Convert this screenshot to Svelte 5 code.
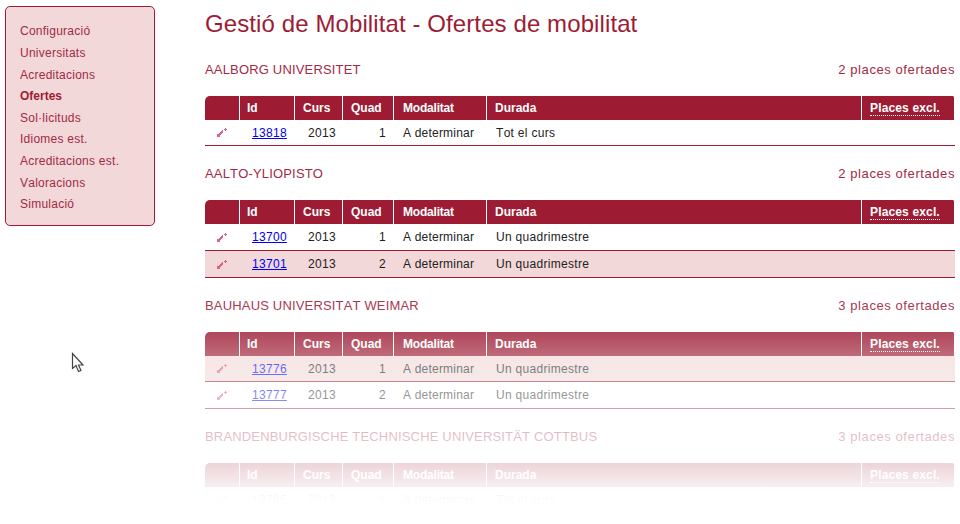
<script>
    const menu = [
        'Configuració', 'Universitats', 'Acreditacions', 'Ofertes', 'Sol·licituds',
        'Idiomes est.', 'Acreditacions est.', 'Valoracions', 'Simulació'
    ];

    const offers = [
        {
            name: 'AALBORG UNIVERSITET',
            places: 2,
            rows: [{ id: 13818, quad: 1, durada: 'Tot el curs' }]
        },
        {
            name: 'AALTO-YLIOPISTO',
            places: 2,
            rows: [
                { id: 13700, quad: 1, durada: 'Un quadrimestre' },
                { id: 13701, quad: 2, durada: 'Un quadrimestre' }
            ]
        },
        {
            name: 'BAUHAUS UNIVERSITAT WEIMAR',
            places: 3,
            rows: [
                { id: 13776, quad: 1, durada: 'Un quadrimestre' },
                { id: 13777, quad: 2, durada: 'Un quadrimestre' }
            ]
        },
        {
            name: 'BRANDENBURGISCHE TECHNISCHE UNIVERSITÄT COTTBUS',
            places: 3,
            rows: [{ id: 13785, quad: 1, durada: 'Tot el curs' }]
        }
    ];
</script>

<div class="page">
    <nav class="sidebar">
        <ul>
            {#each menu as item}
                <li class:active={item === 'Ofertes'}>{item}</li>
            {/each}
        </ul>
    </nav>

    <main class="content">
        <h1>Gestió de Mobilitat - Ofertes de mobilitat</h1>

        {#each offers as offer}
            <section>
                <div class="uni">
                    <h2>{offer.name}</h2>
                    <span class="places">{offer.places} places ofertades</span>
                </div>

                <table>
                    <thead>
                        <tr>
                            <th class="c-edit"></th>
                            <th class="c-id">Id</th>
                            <th class="c-curs">Curs</th>
                            <th class="c-quad">Quad</th>
                            <th class="c-mod">Modalitat</th>
                            <th class="c-dur">Durada</th>
                            <th class="c-exc"><span>Places excl.</span></th>
                        </tr>
                    </thead>
                    <tbody>
                        {#each offer.rows as row}
                            <tr>
                                <td class="edit">
                                    <svg width="10" height="9" viewBox="0 0 10 9" shape-rendering="crispEdges">
                                        <path fill="#d8648c" d="M0 6h3v3H0zM2 5h2v2H2zM3 4h2v2H3zM4 3h2v2H4zM5 2h1v2H5zM8 0h1v1h1v1H9v1H8V2H7V1h1z" />
                                    </svg>
                                </td>
                                <td class="id"><a href="#{row.id}">{row.id}</a></td>
                                <td class="curs">2013</td>
                                <td class="quad">{row.quad}</td>
                                <td class="mod">A determinar</td>
                                <td class="dur">{row.durada}</td>
                                <td></td>
                            </tr>
                        {/each}
                    </tbody>
                </table>
            </section>
        {/each}
    </main>

    <div class="fade"></div>

    <svg class="cursor" width="14" height="21" viewBox="0 0 14 21">
        <path d="M1.5 1.5v15l3.5-3 2.500 6 2.500-1-2.500-5.500h4.500z" fill="#fff" stroke="#444" stroke-width="1.200" />
    </svg>
</div>

<style>
    :global(body)
    {
        margin: 0;
        background: #ffffff;
    }

    .page
    {
        position: relative;
        display: flex;
        align-items: flex-start;
        height: 524px;
        overflow: hidden;
        font-family: "Liberation Sans", Arial, sans-serif;
        font-kerning: none;
        color: #222222;
    }

    .sidebar
    {
        box-sizing: border-box;
        flex: none;
        width: 150px;
        height: 220px;
        margin: 6px 0 0 5px;
        padding: 14.4px 14px 0;
        background: #f2d8d8;
        border: 1px solid #9d1c34;
        border-radius: 5px;
    }

    .sidebar ul
    {
        margin: 0;
        padding: 0;
        list-style: none;
    }

    .sidebar li
    {
        height: 21.6px;
        line-height: 21px;
        font-size: 12px;
        letter-spacing: 0.25px;
        color: #a32a44;
    }

    .sidebar li.active
    {
        font-weight: bold;
        letter-spacing: 0;
        color: #9d1c34;
    }

    .content
    {
        flex: none;
        width: 750px;
        margin-left: 50px;
    }

    h1
    {
        margin: 9px 0 0;
        height: 30px;
        line-height: 30px;
        font-size: 24px;
        font-weight: normal;
        letter-spacing: 0.1px;
        color: #9d1c34;
    }

    .uni
    {
        display: flex;
        justify-content: space-between;
        align-items: center;
        height: 20px;
        margin-bottom: 17px;
        font-size: 13px;
        color: #a32a44;
    }

    h2
    {
        margin: 0;
        font-size: 13px;
        font-weight: normal;
        letter-spacing: 0.17px;
    }

    .places
    {
        letter-spacing: 0.58px;
    }

    section
    {
        padding-top: 20px;
    }

    section + section
    {
        padding-top: 17px;
    }

    table
    {
        width: 750px;
        table-layout: fixed;
        border-collapse: separate;
        border-spacing: 0;
        font-size: 12px;
    }

    th
    {
        box-sizing: border-box;
        height: 24px;
        padding: 0 7px 0 8px;
        text-align: left;
        font-size: 12px;
        color: #ffffff;
        background: #9d1c34;
        border-right: 1px solid #ffffff;
    }

    th:first-child
    {
        border-top-left-radius: 5px;
    }

    th:last-child
    {
        border-top-right-radius: 2px;
    }

    th span
    {
        border-bottom: 1px dotted #ffffff;
        letter-spacing: 0.15px;
    }

    .c-edit { width: 35px; }
    .c-id { width: 55px; }
    .c-curs { width: 48px; }
    .c-quad { width: 51px; }
    .c-mod { width: 93px; }
    .c-dur { width: 375px; }

    .c-id
    {
        padding-left: 7px;
    }

    .c-mod
    {
        padding-left: 9px;
        letter-spacing: -0.2px;
    }

    td
    {
        box-sizing: border-box;
        height: 26px;
        padding: 0 8px;
        border-bottom: 1px solid #9d1c34;
        letter-spacing: 0.3px;
    }

    tbody tr:nth-child(2) td
    {
        height: 27px;
    }

    /* The first row of the second block is a pixel taller */
    section:nth-of-type(2) tbody tr:first-child td
    {
        height: 27px;
    }

    tbody tr:nth-child(even) td
    {
        background: #f2d8d8;
    }

    section:nth-of-type(3) tbody tr:nth-child(odd) td
    {
        background: #f2d8d8;
    }

    section:nth-of-type(3) tbody tr:nth-child(even) td
    {
        background: transparent;
    }

    .edit
    {
        padding: 0 0 0 12px;
    }

    .edit svg
    {
        display: block;
    }

    .id
    {
        padding-left: 12px;
    }

    a
    {
        color: #0000ee;
    }

    .curs
    {
        padding-left: 13px;
    }

    .quad
    {
        text-align: right;
    }

    .mod
    {
        padding-left: 9px;
        letter-spacing: 0.2px;
    }

    .dur
    {
        padding-left: 9px;
    }

    .fade
    {
        position: absolute;
        left: 0;
        right: 0;
        top: 290px;
        bottom: 0;
        background: linear-gradient(
            to bottom,
            rgba(255,255,255,0) 0,
            rgba(255,255,255,0.19) 42px,
            rgba(255,255,255,0.35) 66px,
            rgba(255,255,255,0.81) 173px,
            rgba(255,255,255,0.93) 197px,
            #ffffff 215px
        );
    }

    .cursor
    {
        position: absolute;
        left: 71px;
        top: 352px;
    }
</style>
